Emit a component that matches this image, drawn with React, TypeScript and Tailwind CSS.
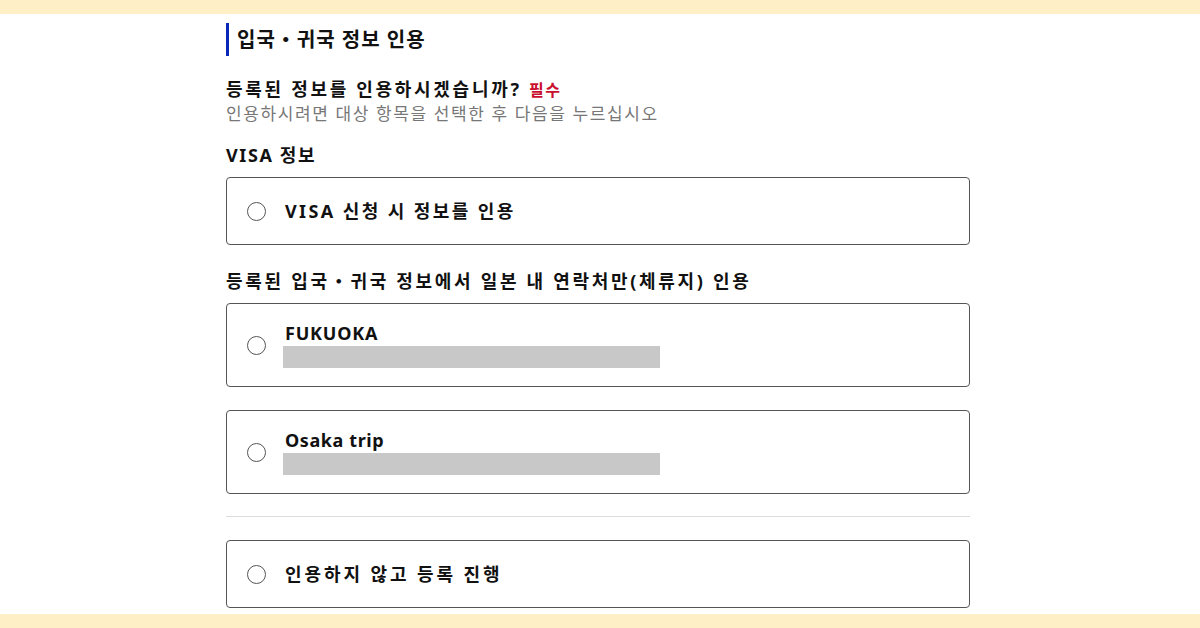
import React from 'react';

const FONT = { fontFamily: '"Noto Sans", "Noto Sans CJK KR", sans-serif' };

const Radio: React.FC = () => (
  <span className="block w-[19px] h-[19px] shrink-0 rounded-full border-[1.5px] border-[#555] bg-white"></span>
);

const OptionBox: React.FC<{ label: string; masked?: boolean; tracking?: string }> = ({
  label,
  masked,
  tracking = 'tracking-[0.4px]',
}) => (
  <div
    className={`flex items-center gap-[19px] border border-[#555] rounded-[4px] pl-[20px] ${
      masked ? 'h-[84px]' : 'h-[68px]'
    }`}
  >
    <Radio />
    <div className="flex flex-col">
      <span className={`text-[18px] leading-[22px] font-bold text-[#111] ${tracking}`}>{label}</span>
      {masked && <div className="mt-[2px] -ml-[2px] h-[22px] w-[377px] bg-[#c8c8c8]"></div>}
    </div>
  </div>
);

const App: React.FC = () => {
  return (
    <div className="flex flex-col h-[628px] bg-white overflow-hidden" style={FONT}>
      <div className="h-[14px] shrink-0 bg-[#feefc6]"></div>
      <div className="flex-1 overflow-hidden">
        <div className="ml-[226px] w-[744px] pt-[9px]">
          <div className="flex items-center h-[33px] border-l-[3px] border-[#0a28b8] pl-[8px]">
            <h2 className="text-[20px] font-bold text-[#111] leading-none tracking-[1px]">입국・귀국 정보 인용</h2>
          </div>

          <div className="mt-[22px]">
            <p className="text-[18px] leading-[23px] font-bold text-[#111] tracking-[2.7px]">
              등록된 정보를 인용하시겠습니까?{' '}
              <span className="text-[16px] tracking-[1.5px] text-[#c8102e]">필수</span>
            </p>
            <p className="text-[17px] leading-[23px] text-[#777] tracking-[1.6px]">
              인용하시려면 대상 항목을 선택한 후 다음을 누르십시오
            </p>
          </div>

          <p className="mt-[18px] text-[18px] leading-[24px] font-bold text-[#111] tracking-[1.6px]">VISA 정보</p>
          <div className="mt-[10px]">
            <OptionBox label="VISA 신청 시 정보를 인용" tracking="tracking-[2.4px]" />
          </div>

          <p className="mt-[24px] text-[18px] leading-[24px] font-bold text-[#111] tracking-[2.7px]">
            등록된 입국・귀국 정보에서 일본 내 연락처만(체류지) 인용
          </p>
          <div className="mt-[10px] flex flex-col gap-[23px]">
            <OptionBox label="FUKUOKA" masked tracking="tracking-[0.8px]" />
            <OptionBox label="Osaka trip" masked tracking="tracking-[0.6px]" />
          </div>

          <div className="mt-[22px] h-px bg-[#ddd]"></div>

          <div className="mt-[23px]">
            <OptionBox label="인용하지 않고 등록 진행" tracking="tracking-[2.9px]" />
          </div>
        </div>
      </div>
      <div className="h-[14px] shrink-0 bg-[#feefc6]"></div>
    </div>
  );
};

export default App;
